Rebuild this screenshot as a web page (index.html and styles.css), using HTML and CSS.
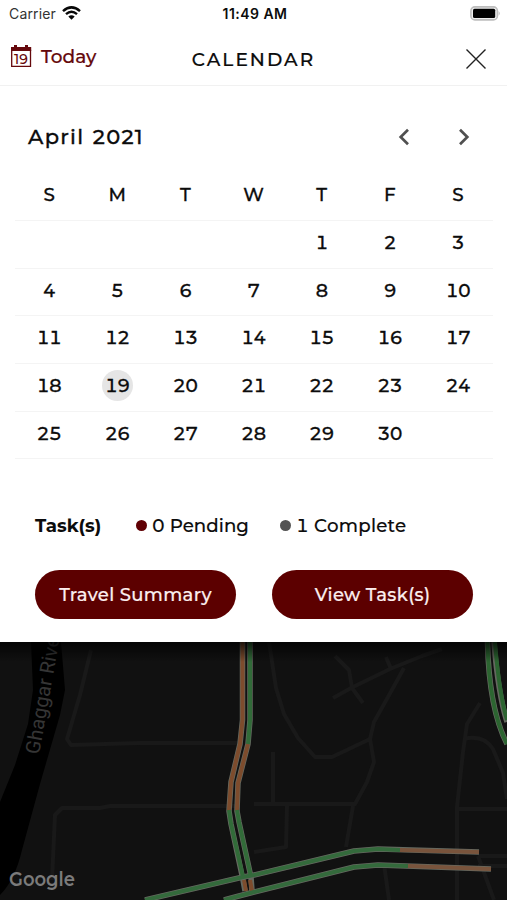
FILE: index.html
```html
<!DOCTYPE html>
<html lang="en">
<head>
<meta charset="utf-8">
<meta name="viewport" content="width=device-width, initial-scale=1">
<title>Calendar</title>
<link rel="stylesheet" href="styles.css">
</head>
<body>
<main class="screen">
  <div class="status">
    <div class="carrier"><span>Carrier</span>
      <svg class="wifi" width="19" height="14" viewBox="0 0 19 14"><path d="M1 5.1Q9.5-2.4 18 5.1M4 8.1Q9.5 3.5 15 8.1" fill="none" stroke="#080808" stroke-width="2.5"/><path d="M6.3 10.6Q9.5 8 12.7 10.6L9.5 13.8Z" fill="#080808"/></svg>
    </div>
    <span class="clock">11:49 AM</span>
    <svg class="battery" width="31" height="15" viewBox="0 0 31 15"><rect x=".9" y=".9" width="26.5" height="13" rx="4" fill="#eee" stroke="#bdbdbd" stroke-width="1.6"/><rect x="3" y="2.8" width="22.2" height="9.3" rx="1.5" fill="#000"/><path d="M28.6 5Q31 7.4 28.6 9.8Z" fill="#bdbdbd"/></svg>
  </div>
  <header class="header">
    <div class="today">
      <svg class="today-icon" width="22" height="23" viewBox="0 0 22 23"><path d="M1.7 4.8V21.300H20.500V4.8" fill="none" stroke="#65080c" stroke-width="1.3"/><path d="M1 2H4V0H7V2H15V0H18V2H21.200V6H1Z" fill="#65080c"/><text class="icon-date" x="11" y="18.500" text-anchor="middle">19</text></svg>
      <span>Today</span>
    </div>
    <h1 class="title">CALENDAR</h1>
    <svg class="close" width="22" height="22" viewBox="0 0 22 22"><path d="M1.5 1.5L20.5 20.5M20.5 1.5L1.5 20.5" stroke="#222" stroke-width="1.4"/></svg>
  </header>
  <section class="calendar">
    <div class="month">
      <h2 class="month-name">April 2021</h2>
      <div class="arrows">
        <svg width="12" height="18" viewBox="0 0 12 18"><path d="M10 1.8L2.7 9L10 16.2" fill="none" stroke="#505050" stroke-width="2.7"/></svg>
        <svg width="12" height="18" viewBox="0 0 12 18"><path d="M2 1.8L9.3 9L2 16.2" fill="none" stroke="#505050" stroke-width="2.7"/></svg>
      </div>
    </div>
    <div class="week names"><span>S</span><span>M</span><span>T</span><span>W</span><span>T</span><span>F</span><span>S</span></div>
    <div class="week"><span></span><span></span><span></span><span></span><span>1</span><span>2</span><span>3</span></div>
    <div class="week"><span>4</span><span>5</span><span>6</span><span>7</span><span>8</span><span>9</span><span>10</span></div>
    <div class="week"><span>11</span><span>12</span><span>13</span><span>14</span><span>15</span><span>16</span><span>17</span></div>
    <div class="week"><span>18</span><span class="selected">19</span><span>20</span><span>21</span><span>22</span><span>23</span><span>24</span></div>
    <div class="week"><span>25</span><span>26</span><span>27</span><span>28</span><span>29</span><span>30</span><span></span></div>
  </section>
  <section class="tasks">
    <div class="summary">
      <strong class="label">Task(s)</strong>
      <span class="count pending"><i class="dot"></i><span>0 Pending</span></span>
      <span class="count complete"><i class="dot"></i><span>1 Complete</span></span>
    </div>
    <div class="actions">
      <button class="button travel">Travel Summary</button>
      <button class="button view">View Task(s)</button>
    </div>
  </section>
  <svg class="map" width="507" height="258" viewBox="0 642 507 258">
    <defs>
      <linearGradient id="shade" x1="0" y1="0" x2="0" y2="1"><stop offset="0" stop-color="#000" stop-opacity=".75"/><stop offset="1" stop-color="#000" stop-opacity="0"/></linearGradient>
    </defs>
    <rect y="642" width="507" height="258" fill="#111"/>
    <path d="M31 642L33 690L28 724L15 765L0 802V895Q15 880 22 850L40 784L60 715L65 690L61 642Z" fill="#000"/>
    <g fill="none" stroke="#191919" stroke-width="4" stroke-linejoin="round">
      <path d="M91 650L80 695L67 739L71 745L140 743L238 743M52 880L55 815L62 808H100L110 806H238"/>
      <path d="M269 642L276 688L284 714L298 738L315 757H332L370 739L374 762L367 782L355 804H254M370 739L374 722L388 697L404 668M333 698L353 687L390 669L422 656L442 649M335 656L349 670L352 688L363 703M386 657L391 669M353 806L346 847M273 752V805M287 806L286 847L254 852"/>
      <path d="M480 703L467 724L463 752L457 807V900M464 739Q483 734 493 749L503 773L507 799M459 809H507M478 856H507M478 866H507M478 856L494 900M384 864L389 900"/>
    </g>
    <g fill="none" stroke-linejoin="round">
      <g stroke="#656960" stroke-width="5.500">
        <path d="M242.500 642V720L240 744L231 782L229 811L231 824L243 880L245 891M250 642V720L248 744L238 783L237 811L239 822L251 877L252 891"/>
        <path d="M145 900L243 877L254 875L354 851L378 849L479 852M224 900L254 892L354 867L378 865L491 869"/>
        <path d="M487.500 642Q489 709 507 744M494 642Q498 693 507 722"/>
      </g>
      <path d="M242.500 642V720L240 744L231 782L229 811M248 744L238 783L237 811M244 880L246 891M250 880L252 891" stroke="#7d4c2d" stroke-width="4"/>
      <path d="M250 642V720L248 744M229 810L231 824L243 877M237 810L239 822L251 877" stroke="#326b39" stroke-width="4"/>
      <path d="M145 900L243 877L254 875L354 851L378 849L400 850M224 900L254 892L354 867L378 865L408 866" stroke="#346a3c" stroke-width="4"/>
      <path d="M400 850L479 852M408 866L491 869" stroke="#79543c" stroke-width="4"/>
      <path d="M487.500 642Q489 709 507 744M495 642Q499 693 507 720" stroke="#2c6531" stroke-width="4"/>
    </g>
    <text class="river" transform="translate(39 755) rotate(-80)" textLength="126">Ghaggar River</text>
    <rect y="642" width="507" height="20" fill="url(#shade)"/>
    <text class="google" x="9" y="886" textLength="66" lengthAdjust="spacingAndGlyphs">Google</text>
  </svg>
</main>
</body>
</html>
```
FILE: styles.css
```css
* { box-sizing: border-box; }
body { margin: 0; background: #fff; color: #0c0c0c; font-family: Montserrat, Inter, "Liberation Sans", sans-serif; }
h1, h2 { margin: 0; font-weight: 500; }
svg { display: block; flex: none; }
.screen { width: 507px; height: 900px; display: flex; flex-direction: column; overflow: hidden; }
.status { height: 28px; display: grid; grid-template-columns: 1fr auto 1fr; align-items: center; padding: 0 6px 1px 9px; font-family: Inter, sans-serif; font-size: 14px; }
.carrier { display: flex; align-items: center; gap: 6px; letter-spacing: .15px; color: #333; }
.wifi { margin-top: -1px; }
.clock { font-weight: 600; letter-spacing: .45px; }
.battery { justify-self: end; margin-top: -1px; }
.header { height: 58px; display: grid; grid-template-columns: 1fr auto 1fr; align-items: center; padding: 5px 20px 0 10px; border-bottom: 1px solid #f1f1f1; }
.today { display: flex; align-items: center; gap: 9px; margin-top: -6px; color: #65080c; font-size: 18.5px; font-weight: 500; -webkit-text-stroke: .2px; }
.icon-date { font-size: 14px; font-weight: 500; fill: #65080c; -webkit-text-stroke: 0; }
.title { font-size: 18.5px; -webkit-text-stroke: .2px; letter-spacing: 2.05px; margin-left: 10px; padding-top: 1px; }
.close { justify-self: end; }
.calendar { height: 375px; padding: 22px 14px 0 15px; }
.month { height: 58px; display: flex; justify-content: space-between; align-items: center; padding: 0 23px 0 13px; }
.month-name { font-size: 21px; -webkit-text-stroke: .3px; letter-spacing: 1.3px; word-spacing: 1.5px; margin-top: -2px; }
.arrows { display: flex; gap: 48px; margin-top: -1px; }
.week { height: 47.7px; display: grid; grid-template-columns: repeat(7, 1fr); place-items: center; border-bottom: 1px solid #f4f4f4; padding: 0 1px 4px 0; font-size: 18.3px; font-weight: 500; -webkit-text-stroke: .3px; font-variant-numeric: tabular-nums; letter-spacing: -.5px; }
.names { height: 55px; padding: 3px 1px 0 0; letter-spacing: 0; }
.selected { width: 31px; height: 31px; border-radius: 50%; background: #e5e5e5; display: flex; align-items: center; justify-content: center; }
.tasks { height: 181px; padding: 52px 34px 0 35px; }
.summary { height: 24px; display: flex; align-items: center; font-size: 18.2px; font-weight: 500; font-variant-numeric: tabular-nums; }
.label { width: 101px; font-weight: 700; }
.count { display: flex; align-items: center; gap: 5px; letter-spacing: .05px; -webkit-text-stroke: .15px; }
.pending { width: 144px; }
.complete { letter-spacing: .25px; }
.dot { width: 11px; height: 11px; border-radius: 50%; background: #600004; }
.complete .dot { background: #535353; }
.actions { display: flex; justify-content: space-between; margin-top: 33px; }
.button { width: 201px; height: 49px; border: 0; border-radius: 25px; background: #5c0000; color: #fbeeee; font: 500 18px Montserrat, Inter, sans-serif; letter-spacing: .35px; -webkit-text-stroke: .2px; }
.map { width: 507px; height: 258px; }
.river { font-family: Roboto, sans-serif; font-size: 20px; fill: #353535; }
.google { font-size: 20px; font-weight: 600; fill: #7b7b7b; }
```
